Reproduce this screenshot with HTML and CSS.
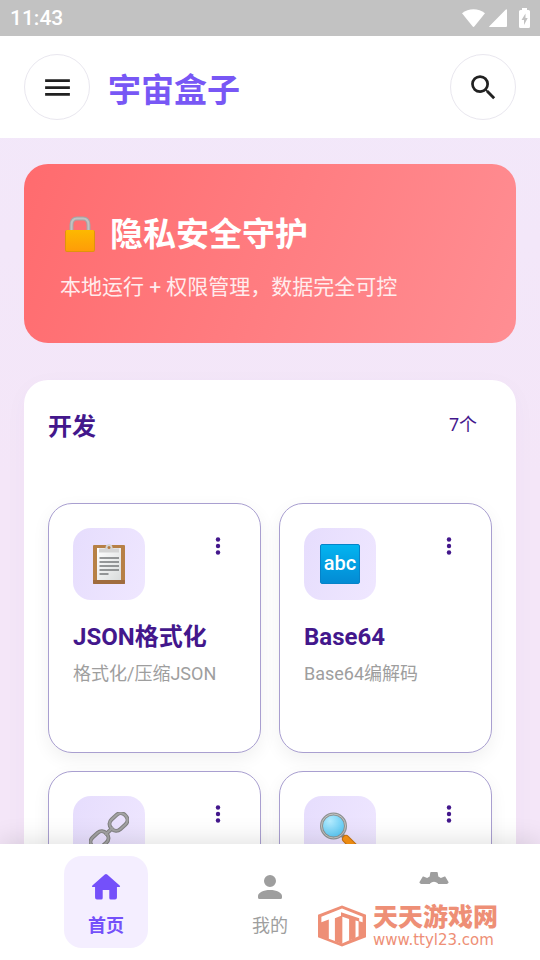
FILE: index.html
```
<!DOCTYPE html>
<html lang="zh-CN">
<head>
    <meta charset="UTF-8">
    <meta name="viewport" content="width=device-width, initial-scale=1.0">
    <title>宇宙盒子</title>
    <link rel="stylesheet" href="styles.css">
</head>
<body>

    <!-- Status bar -->
    <div class="status-bar">
        <span class="clock">11:43</span>
        <div class="status-icons">
            <svg class="wifi" viewBox="0 0 23 18"><path d="M0 4.2C6.500-1 16.500-1 23 4.200L12.500 17.300Q11.500 18.500 10.500 17.300Z"/></svg>
            <svg class="signal" viewBox="0 0 18 18"><path d="M18 1V17Q18 18 17 18H1Q-.4 18 .6 17L16.600.8Q18-.4 18 1Z"/></svg>
            <svg class="battery" viewBox="0 0 11 20"><path fill-rule="evenodd" d="M3 0H8V2H9.500Q11 2 11 3.500V18.500Q11 20 9.500 20H1.500Q0 20 0 18.500V3.500Q0 2 1.500 2H3ZM6.500 5.500 2.500 12H5V17L8.700 10H6.500Z"/></svg>
        </div>
    </div>

    <header class="app-header">
        <button class="round-btn" type="button" aria-label="菜单">
            <svg viewBox="0 0 24 24"><path d="M3 18h18v-2H3v2zm0-5h18v-2H3v2zm0-7v2h18V6H3z"/></svg>
        </button>
        <h1>宇宙盒子</h1>
        <button class="round-btn" type="button" aria-label="搜索">
            <svg viewBox="0 0 24 24"><path d="M15.500 14h-.79l-.28-.27A6.471 6.471 0 0 0 16 9.500 6.500 6.500 0 1 0 9.500 16c1.610 0 3.090-.59 4.230-1.570l.27.28v.79l5 4.990L20.490 19l-4.990-5zm-6 0C7.010 14 5 11.990 5 9.500S7.010 5 9.500 5 14 7.010 14 9.500 11.990 14 9.500 14z"/></svg>
        </button>
    </header>

    <main class="content">
        <section class="banner">
            <h2>
                <svg class="lock" viewBox="0 0 40 40">
                    <defs>
                        <linearGradient id="gold" x1="0" y1="0" x2="0" y2="1">
                            <stop offset="0" stop-color="#fdb900"/>
                            <stop offset="1" stop-color="#ff9c08"/>
                        </linearGradient>
                    </defs>
                    <path d="M11.500 18V10Q11.500 3.500 17 3.500H23Q28.500 3.500 28.500 10V18" fill="none" stroke="#a5a5a5" stroke-width="4"/>
                    <path d="M11.500 18V10Q11.500 3.500 17 3.500H23Q28.500 3.500 28.500 10V18" fill="none" stroke="#c2c2c2" stroke-width="2"/>
                    <rect x="5" y="15" width="30" height="22" rx="2" fill="#e0940c"/>
                    <rect x="6" y="15" width="28" height="21" rx="1" fill="url(#gold)"/>
                </svg>
                隐私安全守护
            </h2>
            <p>本地运行 + 权限管理，数据完全可控</p>
        </section>

        <section class="panel">
            <div class="panel-head">
                <h2>开发</h2>
                <span class="count">7个</span>
            </div>

            <div class="tools">
                <article class="tool">
                    <div class="tool-top">
                        <div class="tile">
                            <svg viewBox="0 0 40 40">
                                <defs>
                                    <linearGradient id="paper" x1="0" y1="0" x2="1" y2="1">
                                        <stop offset="0" stop-color="#fff"/>
                                        <stop offset="1" stop-color="#d9dcdc"/>
                                    </linearGradient>
                                </defs>
                                <rect x="4" y="1" width="32" height="39" rx="1" fill="#b78046"/>
                                <path d="M4 36H36V39Q36 40 35 40H5Q4 40 4 39Z" fill="#a06c3e"/>
                                <rect x="8" y="4" width="24" height="32" fill="url(#paper)"/>
                                <path d="M10 4.500H15Q17 4 17 1.500Q20-1.500 23 1.500Q23 4 25 4.500H30V8.500H10Z" fill="#d4d4d4"/>
                                <circle cx="20" cy="3.500" r="1.500" fill="#b78046"/>
                                <path d="M10.500 14H30M10.500 18H30M10.500 22H30M10.500 26H30M10.500 30H19.500" stroke="#75787a" stroke-width="1.300"/>
                            </svg>
                        </div>
                        <button class="more" type="button" aria-label="更多"><svg viewBox="0 0 24 24"><circle cx="12" cy="5.500" r="2.200"/><circle cx="12" cy="12" r="2.200"/><circle cx="12" cy="18.500" r="2.200"/></svg></button>
                    </div>
                    <h3>JSON格式化</h3>
                    <p>格式化/压缩JSON</p>
                </article>

                <article class="tool">
                    <div class="tool-top">
                        <div class="tile">
                            <span class="abc">abc</span>
                        </div>
                        <button class="more" type="button" aria-label="更多"><svg viewBox="0 0 24 24"><circle cx="12" cy="5.500" r="2.200"/><circle cx="12" cy="12" r="2.200"/><circle cx="12" cy="18.500" r="2.200"/></svg></button>
                    </div>
                    <h3>Base64</h3>
                    <p>Base64编解码</p>
                </article>

                <article class="tool">
                    <div class="tool-top">
                        <div class="tile">
                            <svg viewBox="0 0 40 40" fill="none">
                                <g stroke="#808080" stroke-width="4">
                                    <rect x="-9.500" y="-6.500" width="19" height="13" rx="6" transform="translate(29.500 10) rotate(-42)"/>
                                    <rect x="-9.500" y="-6.500" width="19" height="13" rx="6" transform="translate(10.500 28) rotate(-42)"/>
                                    <path d="M16 23 24 15.500"/>
                                </g>
                                <g stroke="#a3a3a3" stroke-width="2">
                                    <rect x="-9.500" y="-6.500" width="19" height="13" rx="6" transform="translate(29.500 10) rotate(-42)"/>
                                    <rect x="-9.500" y="-6.500" width="19" height="13" rx="6" transform="translate(10.500 28) rotate(-42)"/>
                                    <path d="M16 23 24 15.500"/>
                                </g>
                            </svg>
                        </div>
                        <button class="more" type="button" aria-label="更多"><svg viewBox="0 0 24 24"><circle cx="12" cy="5.500" r="2.200"/><circle cx="12" cy="12" r="2.200"/><circle cx="12" cy="18.500" r="2.200"/></svg></button>
                    </div>
                </article>

                <article class="tool">
                    <div class="tool-top">
                        <div class="tile">
                            <svg viewBox="0 0 40 40">
                                <defs>
                                    <radialGradient id="lens" cx=".35" cy=".3" r=".8">
                                        <stop offset="0" stop-color="#b5ecff"/>
                                        <stop offset="1" stop-color="#4dc3f2"/>
                                    </radialGradient>
                                </defs>
                                <path d="M22 23 27 28" stroke="#888" stroke-width="4"/>
                                <path d="M26 27 36 37" stroke="#c97310" stroke-width="8" stroke-linecap="round"/>
                                <path d="M26 27 36 37" stroke="#fb9413" stroke-width="6" stroke-linecap="round"/>
                                <circle cx="13.500" cy="14" r="12" fill="url(#lens)" stroke="#8e9292" stroke-width="3"/>
                                <circle cx="13.500" cy="14" r="12" fill="none" stroke="#c4c6c4" stroke-width="1"/>
                            </svg>
                        </div>
                        <button class="more" type="button" aria-label="更多"><svg viewBox="0 0 24 24"><circle cx="12" cy="5.500" r="2.200"/><circle cx="12" cy="12" r="2.200"/><circle cx="12" cy="18.500" r="2.200"/></svg></button>
                    </div>
                </article>
            </div>
        </section>
    </main>

    <!-- Bottom navigation -->
    <nav class="bottom-nav">
        <a class="nav-item active" href="#home">
            <svg viewBox="0 0 24 24"><path d="M11.200 3.600Q12 2.900 12.800 3.600L21.100 11Q21.900 12 20.800 12H19.300V19Q19.300 20.300 18 20.300H15.200Q14.200 20.300 14.200 19.300V14H9.800V19.300Q9.800 20.300 8.800 20.300H6Q4.700 20.300 4.700 19V12H3.200Q2.100 12 2.900 11Z"/></svg>
            <span>首页</span>
        </a>
        <a class="nav-item" href="#mine">
            <svg viewBox="0 0 24 24"><path d="M12 4a4 4 0 1 1 0 8 4 4 0 0 1 0-8ZM12 14c4.420 0 8 1.790 8 4v1q0 1-1 1H5q-1 0-1-1v-1c0-2.210 3.580-4 8-4Z"/></svg>
            <span>我的</span>
        </a>
        <a class="nav-item" href="#settings" aria-label="设置">
            <svg viewBox="0 0 24 24"><path d="M12 15.500A3.500 3.500 0 0 1 8.500 12 3.500 3.500 0 0 1 12 8.500a3.500 3.500 0 0 1 3.500 3.500 3.500 3.500 0 0 1-3.500 3.500m7.430-2.530c.04-.32.07-.64.07-.97s-.03-.66-.07-1l2.110-1.630c.19-.15.24-.42.12-.64l-2-3.460c-.12-.22-.39-.31-.61-.22l-2.490 1c-.52-.39-1.060-.73-1.690-.98l-.37-2.650A.506.506 0 0 0 14 2h-4c-.25 0-.46.18-.5.42l-.37 2.650c-.63.25-1.170.59-1.690.98l-2.490-1c-.22-.09-.49 0-.61.22l-2 3.460c-.13.22-.07.49.12.64L4.570 11c-.04.34-.07.67-.07 1s.03.65.07.97l-2.110 1.660c-.19.15-.25.42-.12.64l2 3.460c.12.22.39.3.61.22l2.490-1.010c.52.4 1.060.74 1.690.99l.37 2.650c.04.24.25.42.5.42h4c.25 0 .46-.18.5-.42l.37-2.650c.63-.26 1.170-.59 1.690-.99l2.490 1.010c.22.08.49 0 .61-.22l2-3.460c.12-.22.07-.49-.12-.64l-2.110-1.660Z"/></svg>
        </a>

        <div class="site-mark">
            <svg viewBox="0 0 142 122">
                <path d="M71 0 142 28V94L71 122 0 94V28Z"/>
                <path class="cut" d="M10 34 71 9 132 34V50L120 46V91L71 113 32 99V42L10 50Z"/>
                <path d="M50 38 72 29V114L50 106ZM68 20 122 38V48L111 45V97L92 104V40L68 32Z"/>
            </svg>
            <div>
                <strong>天天游戏网</strong>
                <span>www.ttyl23.com</span>
            </div>
        </div>
    </nav>

</body>
</html>
```
FILE: styles.css
```
* {
    box-sizing: border-box;
    margin: 0;
    padding: 0;
}
body {
    display: flex;
    flex-direction: column;
    height: 100vh;
    font-family: Roboto, "Noto Sans CJK SC", sans-serif;
    background: linear-gradient(#f2e8fa, #f4e6f8 50%);
}
button {
    border: none;
    background: none;
    cursor: pointer;
}

/* Status bar */
.status-bar {
    display: flex;
    align-items: center;
    justify-content: space-between;
    height: 36px;
    padding: 0 10px;
    background-color: #c2c2c2;
    color: #fff;
}
.clock {
    font-size: 21px;
    font-weight: 500;
}
.status-icons {
    display: flex;
    align-items: center;
    gap: 4px;
}
.status-icons svg {
    height: 18px;
    fill: #fff;
}
.status-icons .battery {
    height: 20px;
    margin-left: 8px;
}

/* Header */
.app-header {
    display: flex;
    align-items: center;
    gap: 18px;
    padding: 18px 24px;
    background-color: #fff;
}
.app-header h1 {
    flex: 1;
    padding-top: 8px;
    font-size: 33px;
    line-height: 48px;
    font-weight: 700;
    color: #7857f5;
}
.round-btn {
    display: flex;
    align-items: center;
    justify-content: center;
    width: 66px;
    height: 66px;
    border: 1px solid #e9e7ef;
    border-radius: 50%;
}
.round-btn svg {
    width: 33px;
    height: 33px;
    fill: #212121;
}

/* Scrolling content */
.content {
    flex: 1;
    min-height: 0;
    overflow-y: auto;
    scrollbar-width: none;
    padding: 26px 24px;
}
.banner {
    padding: 46px 36px 40px;
    margin-bottom: 37px;
    border-radius: 24px;
    background: linear-gradient(110deg, #ff6b6e, #ff8e93);
    color: #fff;
}
.banner h2 {
    display: flex;
    align-items: center;
    gap: 10px;
    margin-bottom: 11px;
    font-size: 33px;
    line-height: 50px;
}
.banner .lock {
    width: 40px;
    height: 40px;
}
.banner p {
    font-size: 21px;
    line-height: 32px;
    color: #ffeced;
}
.panel {
    padding: 29px 24px 24px;
    border-radius: 24px;
    background-color: #fff;
    box-shadow: 0 6px 24px rgba(80, 40, 140, 0.03);
}
.panel-head {
    display: flex;
    align-items: flex-start;
    justify-content: space-between;
    padding-right: 15px;
    margin-bottom: 58px;
    color: #43178c;
}
.panel-head h2 {
    font-size: 24px;
    line-height: 36px;
}
.count {
    font-size: 18px;
    line-height: 32px;
}
.tools {
    display: grid;
    grid-template-columns: 1fr 1fr;
    gap: 18px;
}
.tool {
    min-height: 250px;
    padding: 24px;
    border: 1px solid #a99fd0;
    border-radius: 24px;
    background-color: #fff;
    box-shadow: 0 6px 18px rgba(0, 0, 0, 0.06);
}
.tool-top {
    display: flex;
    justify-content: space-between;
    margin-bottom: 21px;
}
.tile {
    display: flex;
    align-items: center;
    justify-content: center;
    width: 72px;
    height: 72px;
    border-radius: 18px;
    background: linear-gradient(110deg, #e6ddfd, #efe7ff);
}
.tile svg {
    width: 40px;
    height: 40px;
}
.abc {
    width: 40px;
    height: 40px;
    border: 1px solid #0683c8;
    border-radius: 2px;
    background: linear-gradient(#03b4f0, #038bd4);
    color: #fff;
    font-size: 20px;
    line-height: 36px;
    font-weight: 500;
    text-align: center;
}
.more {
    width: 36px;
    height: 36px;
}
.more svg {
    display: block;
    width: 24px;
    height: 24px;
    margin: 0 auto;
    fill: #43178c;
}
.tool h3 {
    font-size: 24px;
    line-height: 32px;
    color: #43178c;
}
.tool p {
    margin-top: 8px;
    font-size: 18px;
    line-height: 26px;
    color: #9e9e9e;
}

/* Bottom navigation */
.bottom-nav {
    position: relative;
    display: flex;
    padding: 12px 24px;
    background-color: #fff;
    box-shadow: 0 -3px 24px rgba(0, 0, 0, 0.12);
}
.nav-item {
    display: flex;
    flex: 1;
    flex-direction: column;
    align-items: center;
    gap: 8px;
    min-height: 92px;
    padding: 13px 24px 9px;
    margin: 0 40px;
    border-radius: 18px;
    font-size: 18px;
    line-height: 26px;
    white-space: nowrap;
    text-decoration: none;
    color: #9e9e9e;
}
.nav-item svg {
    width: 36px;
    height: 36px;
    fill: currentColor;
}
.nav-item.active {
    background-color: #f4eeff;
    color: #7450fa;
    font-weight: 700;
}

/* Site mark, sits over the last tab */
.site-mark {
    position: absolute;
    right: 42px;
    bottom: 0;
    display: flex;
    align-items: center;
    gap: 7px;
    height: 76px;
    padding-top: 8px;
    background-color: #fff;
    color: #ee8f76;
}
.site-mark svg {
    width: 48px;
    height: 42px;
    fill: #ee8f76;
}
.site-mark .cut {
    fill: #fff;
}
.site-mark strong,
.site-mark span {
    display: block;
}
.site-mark strong {
    font-size: 25px;
    line-height: 28px;
    font-weight: 900;
}
.site-mark span {
    font-family: "DejaVu Sans", sans-serif;
    font-size: 15px;
    line-height: 16px;
}
```
